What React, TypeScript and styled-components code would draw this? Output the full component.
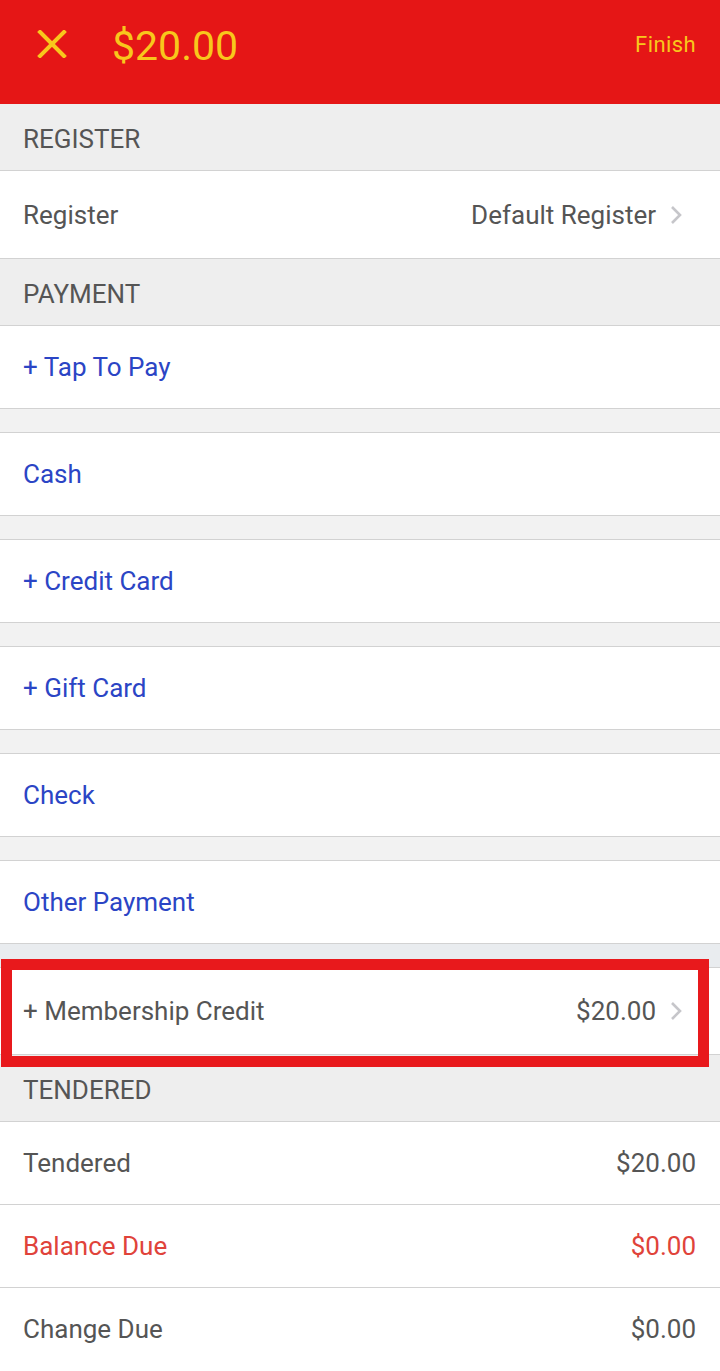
import styled, { createGlobalStyle } from 'styled-components';

const GlobalStyle = createGlobalStyle`
  html, body {
    margin: 0;
    padding: 0;
    background: #ffffff;
    font-family: Roboto, "Liberation Sans", sans-serif;
  }
`;

type Tone = 'plain' | 'link' | 'alert';

const toneColor: Record<Tone, string> = {
  plain: '#555555',
  link: '#2b45c5',
  alert: '#e0433a',
};

const App = () => {
  return (
    <Page>
      <GlobalStyle />
      <Header>
        <CloseButton>
          <svg width="30" height="28" viewBox="0 0 30 28">
            <path d="M3 2 L27 26 M27 2 L3 26" stroke="#f8c71c" strokeWidth="4" strokeLinecap="square" fill="none" />
          </svg>
        </CloseButton>
        <Total>$20.00</Total>
        <Finish>Finish</Finish>
      </Header>

      <SectionHeader>REGISTER</SectionHeader>
      <Row size={87}>
        <Label tone="plain">Register</Label>
        <Value tone="plain">
          Default Register
          <Chevron />
        </Value>
      </Row>

      <SectionHeader>PAYMENT</SectionHeader>
      <Row>
        <Label tone="link">+ Tap To Pay</Label>
      </Row>
      <Spacer />
      <Row>
        <Label tone="link">Cash</Label>
      </Row>
      <Spacer />
      <Row>
        <Label tone="link">+ Credit Card</Label>
      </Row>
      <Spacer />
      <Row>
        <Label tone="link">+ Gift Card</Label>
      </Row>
      <Spacer />
      <Row>
        <Label tone="link">Check</Label>
      </Row>
      <Spacer />
      <Row>
        <Label tone="link">Other Payment</Label>
      </Row>
      <Spacer tint="#e9ecef" />
      <HighlightWrap>
        <Row size={86}>
          <Label tone="plain">+ Membership Credit</Label>
          <Value tone="plain">
            $20.00
            <Chevron />
          </Value>
        </Row>
        <Highlight />
      </HighlightWrap>

      <SectionHeader>TENDERED</SectionHeader>
      <Row>
        <Label tone="plain">Tendered</Label>
        <Value tone="plain">$20.00</Value>
      </Row>
      <Row>
        <Label tone="alert">Balance Due</Label>
        <Value tone="alert">$0.00</Value>
      </Row>
      <Row last>
        <Label tone="plain">Change Due</Label>
        <Value tone="plain">$0.00</Value>
      </Row>
    </Page>
  );
};

const Chevron = () => (
  <ChevronIcon width="12" height="20" viewBox="0 0 12 20">
    <path d="M2 2 L10 10 L2 18" stroke="#c6c6ca" strokeWidth="2.6" fill="none" />
  </ChevronIcon>
);

export default App;

// Styles
const Page = styled.div`
  width: 720px;
  height: 1371px;
  overflow: hidden;
  display: flex;
  flex-direction: column;
  background: #ffffff;
`;

const Header = styled.div`
  height: 104px;
  flex-shrink: 0;
  background: #e51616;
  display: flex;
  align-items: center;
  padding: 0 24px 16px 37px;
  box-sizing: border-box;
  color: #f8c71c;
`;

const CloseButton = styled.div`
  width: 30px;
  height: 28px;
  display: flex;
`;

const Total = styled.div`
  margin-left: 45px;
  font-size: 41px;
  line-height: 1;
  margin-top: 4px;
`;

const Finish = styled.div`
  margin-left: auto;
  font-size: 22px;
  letter-spacing: 0.4px;
`;

const SectionHeader = styled.div`
  height: 67px;
  flex-shrink: 0;
  box-sizing: border-box;
  background: #eeeeee;
  border-bottom: 1px solid #d2d2d2;
  display: flex;
  align-items: center;
  padding: 3px 0 0 23px;
  font-size: 26px;
  color: #555555;
`;

const Row = styled.div<{ size?: number; last?: boolean }>`
  height: ${(p) => p.size ?? 82}px;
  flex-shrink: 0;
  background: #ffffff;
  border-bottom: ${(p) => (p.last ? 'none' : '1px solid #d2d2d2')};
  display: flex;
  align-items: center;
  justify-content: space-between;
  padding: 0 24px 0 23px;
`;

const Label = styled.div<{ tone: Tone }>`
  font-size: 26px;
  color: ${(p) => toneColor[p.tone]};
`;

const Value = styled.div<{ tone: Tone }>`
  display: flex;
  align-items: center;
  gap: 14px;
  font-size: 26px;
  color: ${(p) => toneColor[p.tone]};
`;

const ChevronIcon = styled.svg`
  margin-right: 14px;
`;

const Spacer = styled.div<{ tint?: string }>`
  height: 23px;
  flex-shrink: 0;
  background: ${(p) => p.tint ?? '#f2f2f2'};
  border-bottom: 1px solid #d2d2d2;
`;

const HighlightWrap = styled.div`
  position: relative;
  flex-shrink: 0;
`;

const Highlight = styled.div`
  position: absolute;
  top: -9px;
  left: 1px;
  right: 11px;
  bottom: -12px;
  border: 11px solid #e8191c;
  pointer-events: none;
`;
